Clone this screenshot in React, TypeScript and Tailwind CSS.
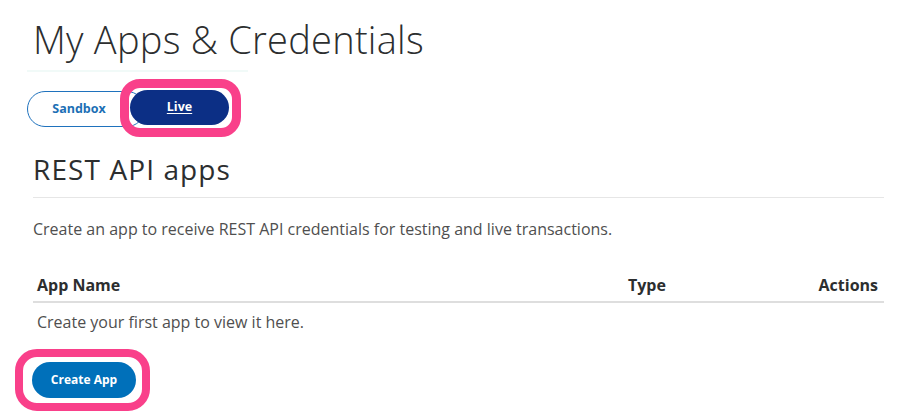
import React from "react";

export default function App() {
  return (
    <div
      className="w-[902px] h-[417px] bg-white overflow-hidden"
      style={{ fontFamily: "'Open Sans', Lato, sans-serif" }}
    >
      <div className="pl-[33px] pr-[18px] pt-[16px] flex flex-col">
        <h1 className="text-[38px] leading-[46px] font-light text-[#2c2e2f] tracking-[0.25px]">
          My Apps &amp; Credentials
        </h1>
        <div className="mt-[8px] ml-[-6px] w-[221px] h-[2px] bg-[#f1faf8]" />
        <div className="mt-[18px] ml-[-6px] flex items-start">
          <button className="w-[118px] h-[36px] mt-[1px] rounded-full border border-[#1f72bd] bg-white text-[#1c6fb5] text-[12.5px] font-bold pr-[14px]">
            Sandbox
          </button>
          <div className="relative ml-[-15px]">
            <button className="relative z-10 w-[99px] h-[35px] rounded-full bg-[#0c2f85] text-white text-[12.5px] font-bold underline underline-offset-2">
              Live
            </button>
            <div className="absolute left-[-10px] top-[-11px] w-[121px] h-[58px] rounded-[20px] border-[9px] border-[#f9408a] z-20 pointer-events-none" />
          </div>
        </div>
        <div className="mt-[26px] pb-[12px] border-b border-[#e6e6e6]">
          <h2 className="text-[28px] leading-[32px] font-normal text-[#2c2e2f] tracking-[1.1px]">REST API apps</h2>
        </div>
        <p className="mt-[20px] text-[16px] leading-[22px] text-[#4f4f4f]">
          Create an app to receive REST API credentials for testing and live transactions.
        </p>
        <div className="mt-[33px] flex text-[16px] leading-[24px] font-bold text-[#2c2e2f] pb-[4px] border-b-2 border-[#dedede]">
          <div className="pl-[4px] w-[595px]">App Name</div>
          <div className="flex-1">Type</div>
          <div className="pr-[6px] text-right">Actions</div>
        </div>
        <p className="mt-[8px] pl-[4px] text-[16px] leading-[22px] text-[#4f4f4f]">
          Create your first app to view it here.
        </p>
        <div className="mt-[29px] ml-[-1px] relative w-[104px]">
          <button className="w-[104px] h-[36px] rounded-full bg-[#0070ba] text-white text-[12px] font-bold">
            Create App
          </button>
          <div className="absolute left-[-17px] top-[-13px] w-[135px] h-[62px] rounded-[22px] border-[8px] border-[#f9408a] pointer-events-none" />
        </div>
      </div>
    </div>
  );
}
